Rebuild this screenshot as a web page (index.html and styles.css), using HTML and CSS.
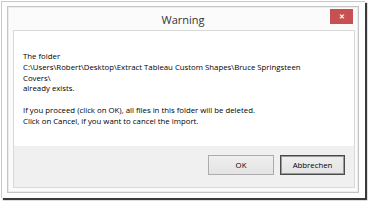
FILE: index.html
```html
<!DOCTYPE html>
<html>
<head>
<meta charset="utf-8">
<link rel="stylesheet" href="styles.css">
</head>
<body>
<div class="shot">
  <div class="window">
    <div class="titlebar">
      <span class="title">Warning</span>
      <span class="close">&#x2715;</span>
    </div>
    <div class="panel">
      <div class="message">
        The folder<br>
        C:\Users\Robert\Desktop\Extract Tableau Custom Shapes\Bruce Springsteen<br>
        Covers\<br>
        already exists.<br>
        <br>
        If you proceed (click on OK), all files in this folder will be deleted.<br>
        Click on Cancel, if you want to cancel the import.
      </div>
      <div class="buttons">
        <button class="btn">OK</button>
        <button class="btn btn-default">Abbrechen</button>
      </div>
    </div>
  </div>
</div>
</body>
</html>
```

FILE: styles.css
```css
html, body {
  margin: 0;
  padding: 0;
  background: #ffffff;
}
body {
  width: 370px;
  height: 202px;
  overflow: hidden;
  font-family: "Open Sans", "Noto Sans", sans-serif;
}
.shot {
  margin: 1px 0 0 1px;
  width: 364px;
  height: 197px;
  box-sizing: border-box;
  border-left: 1px solid #c9c9c9;
  border-top: 1px solid #c9c9c9;
  background: #fdfdfd;
  box-shadow: 2px 2px 1px #3a3a3a;
  padding: 4px 0 0 5px;
}
.window {
  width: 352px;
  height: 187px;
  box-sizing: border-box;
  border: 1px solid #c4c4c4;
  box-shadow: inset 0 0 0 1px #ececec;
  background: #fbfbfb;
  display: flex;
  flex-direction: column;
  padding: 0 3px 4px 5px;
}
.titlebar {
  height: 23px;
  display: grid;
  grid-template-columns: 1fr auto 1fr;
  align-items: start;
}
.title {
  grid-column: 2;
  font-size: 11px;
  line-height: 13px;
  color: #333333;
  padding-top: 6px;
  margin-left: -2px;
}
.close {
  grid-column: 3;
  justify-self: end;
  margin-top: 2px;
  margin-right: 2px;
  width: 23px;
  height: 15px;
  background: #c75050;
  color: #ffffff;
  font-size: 6.5px;
  font-weight: bold;
  line-height: 15px;
  text-align: center;
}
.panel {
  flex: 1;
  border: 1px solid #d9d9d9;
  background: #ffffff;
  display: flex;
  flex-direction: column;
}
.message {
  flex: 1;
  padding: 20px 0 0 9px;
  font-size: 7.8px;
  line-height: 10.8px;
  color: #000000;
}
.buttons {
  height: 41px;
  box-sizing: border-box;
  background: #f0f0f0;
  display: flex;
  justify-content: flex-end;
  align-items: flex-start;
  gap: 6px;
  padding: 9px 9px 0 0;
}
.btn {
  width: 66px;
  height: 20px;
  margin: 0;
  padding: 0;
  box-sizing: border-box;
  border: 1px solid #acacac;
  background: linear-gradient(#efefef, #e3e3e3);
  font-family: "Open Sans", "Noto Sans", sans-serif;
  font-size: 7.8px;
  color: #000000;
}
.btn-default {
  width: 65px;
  border: 1px solid #4a4a4a;
  box-shadow: inset 0 0 0 1px #9a9a9a;
}
```
